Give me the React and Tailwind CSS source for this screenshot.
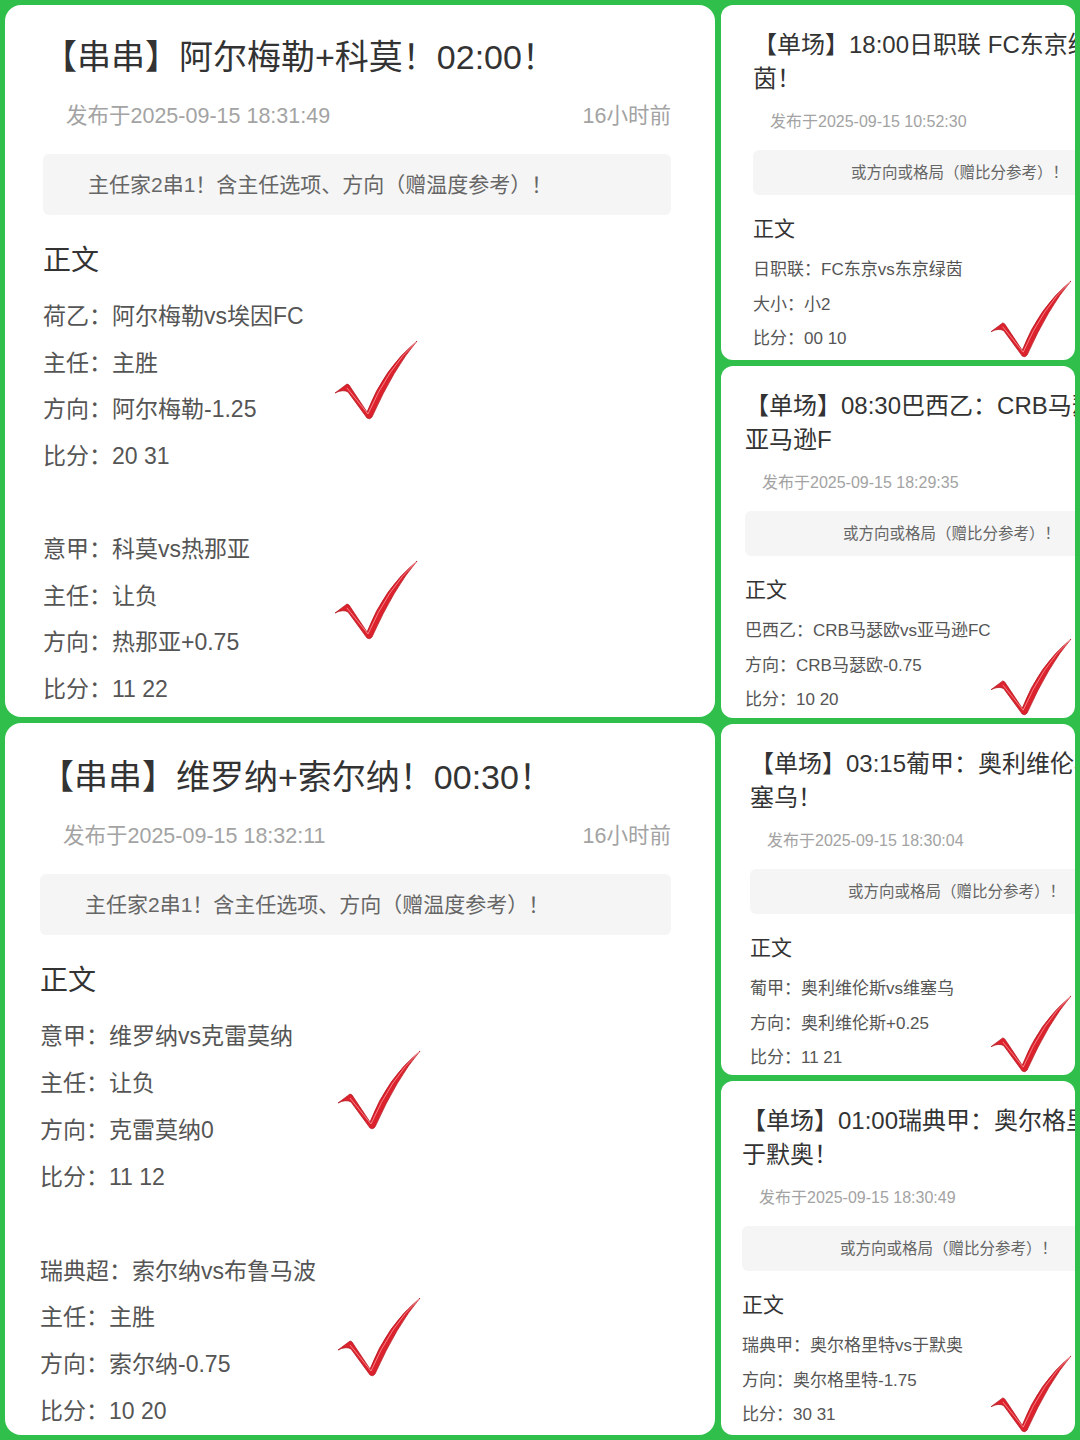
import React from 'react';

function Check({ className }) {
  return (
    <svg viewBox="0 0 84 80" className={className}>
      <path
        d="M1 53 L13 44 Q15 44 17 48 L33 72 Q50 28 83 1 Q60 28 38 77 Q36 80 33 78 L14 52 Q9 49 1 53 Z"
        fill="#dc222c"
        stroke="#b0131c"
        strokeWidth="0.7"
      />
      <path d="M13 48 L34 74 Q54 28 82 2" fill="none" stroke="#ff9aa0" strokeWidth="1" opacity="0.8" />
    </svg>
  );
}

function BigCard({ title, date, groups, checks, shift }) {
  return (
    <div className={`relative h-[712px] bg-white rounded-[16px] overflow-hidden pr-[44px] ${shift ? 'pl-[35px] pt-[31px]' : 'pl-[38px] pt-[29px]'}`}>
      <div className="text-[34px] leading-[46px] text-[#333] whitespace-nowrap">{title}</div>
      <div className="mt-[21px] flex justify-between pl-[23px] text-[21.5px] leading-[30px] text-[#a3a3a3]">
        <span>{date}</span>
        <span>16小时前</span>
      </div>
      <div className="mt-[23px] h-[61px] bg-[#f5f5f5] rounded-[6px] flex items-center pl-[45px] text-[21px] text-[#666]">
        主任家2串1！含主任选项、方向（赠温度参考）！
      </div>
      <div className="mt-[26px] text-[28px] leading-[40px] text-[#333]">正文</div>
      <div className={`mt-[12px] text-[23px] text-[#555] ${shift ? 'leading-[46.9px]' : 'leading-[46.6px]'}`}>
        {groups.map((g, i) => (
          <div key={i} className={i > 0 ? (shift ? 'mt-[46.9px]' : 'mt-[46.6px]') : ''}>
            {g.map((line) => (
              <div key={line}>{line}</div>
            ))}
          </div>
        ))}
      </div>
      {checks.map((top) => (
        <Check key={top} className={`absolute w-[84px] h-[80px] ${shift ? 'left-[332px]' : 'left-[329px]'} ${top}`} />
      ))}
    </div>
  );
}

function SmallCard({ line1, line2, date, lines, h, pl }) {
  return (
    <div className={`relative bg-white rounded-[12px] overflow-hidden pt-[23px] ${h} ${pl}`}>
      <div className="text-[24px] leading-[34px] text-[#333] whitespace-nowrap">
        <div>{line1}</div>
        <div>{line2}</div>
      </div>
      <div className="mt-[14px] pl-[17px] text-[16px] leading-[24px] text-[#a3a3a3] whitespace-nowrap">{date}</div>
      <div className="mt-[16px] h-[45px] w-[400px] bg-[#f5f5f5] rounded-[6px] flex items-center pl-[98px] text-[15.5px] text-[#666] whitespace-nowrap">
        或方向或格局（赠比分参考）！
      </div>
      <div className="mt-[19px] text-[21px] leading-[30px] text-[#333]">正文</div>
      <div className="mt-[9px] text-[17px] leading-[34.5px] text-[#555] whitespace-nowrap">
        {lines.map((line) => (
          <div key={line}>{line}</div>
        ))}
      </div>
      <Check className="absolute right-[3px] bottom-[2px] w-[82px] h-[78px]" />
    </div>
  );
}

export default function App() {
  return (
    <div className="w-[1080px] h-[1440px] bg-[#2fbf4a] p-[5px] flex gap-[6px] font-['Liberation_Sans','Noto_Sans_CJK_SC',sans-serif]">
      <div className="w-[710px] shrink-0 flex flex-col gap-[6px]">
        <BigCard
          title="【串串】阿尔梅勒+科莫！02:00！"
          date="发布于2025-09-15 18:31:49"
          groups={[
            ['荷乙：阿尔梅勒vs埃因FC', '主任：主胜', '方向：阿尔梅勒-1.25', '比分：20 31'],
            ['意甲：科莫vs热那亚', '主任：让负', '方向：热那亚+0.75', '比分：11 22'],
          ]}
          checks={['top-[335px]', 'top-[555px]']}
        />
        <BigCard
          shift
          title="【串串】维罗纳+索尔纳！00:30！"
          date="发布于2025-09-15 18:32:11"
          groups={[
            ['意甲：维罗纳vs克雷莫纳', '主任：让负', '方向：克雷莫纳0', '比分：11 12'],
            ['瑞典超：索尔纳vs布鲁马波', '主任：主胜', '方向：索尔纳-0.75', '比分：10 20'],
          ]}
          checks={['top-[327px]', 'top-[574px]']}
        />
      </div>
      <div className="w-[354px] shrink-0 flex flex-col gap-[6px]">
        <SmallCard
          h="h-[355px]"
          pl="pl-[32px]"
          line1="【单场】18:00日职联 FC东京绿"
          line2="茵！"
          date="发布于2025-09-15 10:52:30"
          lines={['日职联：FC东京vs东京绿茵', '大小：小2', '比分：00 10']}
        />
        <SmallCard
          h="h-[352px]"
          pl="pl-[24px]"
          line1="【单场】08:30巴西乙：CRB马瑟欧vs"
          line2="亚马逊F"
          date="发布于2025-09-15 18:29:35"
          lines={['巴西乙：CRB马瑟欧vs亚马逊FC', '方向：CRB马瑟欧-0.75', '比分：10 20']}
        />
        <SmallCard
          h="h-[351px]"
          pl="pl-[29px]"
          line1="【单场】03:15葡甲：奥利维伦斯vs维"
          line2="塞乌！"
          date="发布于2025-09-15 18:30:04"
          lines={['葡甲：奥利维伦斯vs维塞乌', '方向：奥利维伦斯+0.25', '比分：11 21']}
        />
        <SmallCard
          h="h-[354px]"
          pl="pl-[21px]"
          line1="【单场】01:00瑞典甲：奥尔格里特vs"
          line2="于默奥！"
          date="发布于2025-09-15 18:30:49"
          lines={['瑞典甲：奥尔格里特vs于默奥', '方向：奥尔格里特-1.75', '比分：30 31']}
        />
      </div>
    </div>
  );
}
